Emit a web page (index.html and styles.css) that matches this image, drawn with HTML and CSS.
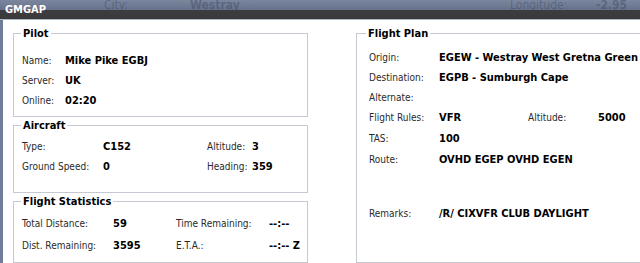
FILE: index.html
```html
<!DOCTYPE html>
<html lang="en">
<head>
  <meta charset="UTF-8" />
  <title>GMGAP</title>
  <link rel="stylesheet" href="styles.css">
</head>
<body>

<div class="titlebar">
  <span class="title">GMGAP</span>
  <div class="ghosts">
    <span class="ghost ghost-city">City:</span>
    <span class="ghost ghost-cityval">Westray</span>
    <span class="ghost ghost-lon">Longitude:</span>
    <span class="ghost ghost-lonval">-2.95</span>
  </div>
</div>

<div class="window">
  <div class="col left">
    <fieldset class="box pilot">
      <legend>Pilot</legend>
      <div class="rows">
        <span class="lbl">Name:</span><span class="val">Mike Pike EGBJ</span>
        <span class="lbl">Server:</span><span class="val">UK</span>
        <span class="lbl">Online:</span><span class="val">02:20</span>
      </div>
    </fieldset>

    <fieldset class="box aircraft">
      <legend>Aircraft</legend>
      <div class="rows">
        <span class="lbl">Type:</span><span class="val">C152</span>
        <span class="lbl">Altitude:</span><span class="val">3</span>
        <span class="lbl">Ground Speed:</span><span class="val">0</span>
        <span class="lbl">Heading:</span><span class="val">359</span>
      </div>
    </fieldset>

    <fieldset class="box stats">
      <legend>Flight Statistics</legend>
      <div class="rows">
        <span class="lbl">Total Distance:</span><span class="val">59</span>
        <span class="lbl">Time Remaining:</span><span class="val">--:--</span>
        <span class="lbl">Dist. Remaining:</span><span class="val">3595</span>
        <span class="lbl">E.T.A.:</span><span class="val">--:-- Z</span>
      </div>
    </fieldset>
  </div>

  <div class="col right">
    <fieldset class="box plan">
      <legend>Flight Plan</legend>
      <div class="rows">
        <span class="lbl">Origin:</span><span class="val wide">EGEW - Westray West Gretna Green</span>
        <span class="lbl">Destination:</span><span class="val wide">EGPB - Sumburgh Cape</span>
        <span class="lbl">Alternate:</span><span class="val wide"></span>
        <span class="lbl">Flight Rules:</span><span class="val">VFR</span>
        <span class="lbl">Altitude:</span><span class="val">5000</span>
        <span class="lbl">TAS:</span><span class="val wide">100</span>
        <span class="lbl">Route:</span><span class="val wide">OVHD EGEP OVHD EGEN</span>
        <span class="lbl remarks">Remarks:</span><span class="val wide remarks">/R/ CIXVFR CLUB DAYLIGHT</span>
      </div>
    </fieldset>
  </div>
</div>

</body>
</html>
```

FILE: styles.css
```css
html, body {
  margin: 0; padding: 0;
  width: 640px; height: 263px;
  overflow: hidden;
  background: #fff;
  font-family: "DejaVu Sans Condensed", "DejaVu Sans", sans-serif;
  font-size: 11px;
  color: #000;
}

.titlebar {
  position: relative;
  height: 19px;
  background: linear-gradient(#7b869e 0, #66728c 10px, #3d3d40 10px, #3a3a3c 19px);
  border-bottom: 1px solid #aeb6c6;
  overflow: hidden;
}
.title {
  position: absolute;
  left: 5px; top: 3px;
  color: #fff;
  font-weight: bold;
  font-size: 11px;
  z-index: 1;
}
.ghosts {
  position: absolute;
  left: 0; top: 0; right: 0;
  height: 10px;
  overflow: hidden;
}
.ghost {
  position: absolute;
  top: -1px;
  font-size: 12px;
  line-height: 12px;
  color: rgba(40, 48, 64, 0.32);
}
.ghost-city { left: 104px; }
.ghost-cityval { left: 190px; font-weight: bold; }
.ghost-lon { left: 510px; }
.ghost-lonval { left: 596px; font-weight: bold; }

.window {
  display: flex;
  gap: 48px;
  height: 243px;
  padding-left: 13px;
  border-left: 3px solid #6f7d99;
  box-sizing: border-box;
}
.col { display: flex; flex-direction: column; }
.left { width: 295px; flex: none; margin-left: -3px; }
.right { width: 320px; flex: none; }

.box {
  margin: 0;
  padding: 0 0 0 8px;
  border: 1px solid #c6c8d2;
  box-sizing: border-box;
}
.box legend {
  font-weight: bold;
  padding: 0 2px;
  margin-left: -1px;
}
.rows {
  display: grid;
  align-items: center;
}
.lbl { color: #2a2a2a; font-size: 10px; white-space: nowrap; }
.val { font-weight: bold; white-space: nowrap; }

.pilot { margin-top: 7px; height: 90px; }
.pilot .rows {
  grid-template-columns: 43px auto;
  grid-auto-rows: 20px;
  padding-top: 10px;
}

.aircraft { margin-top: 2px; height: 74px; }
.aircraft .rows {
  grid-template-columns: 81px 104px 45px auto;
  grid-auto-rows: 20px;
  padding-top: 4px;
}

.stats { margin-top: 2px; flex: 1; }
.stats .rows {
  grid-template-columns: 91px 63px 93px auto;
  grid-auto-rows: 22px;
  padding-top: 4px;
}

.plan { margin-top: 7px; flex: 1; border-right: none; padding-left: 12px; }
.plan legend { margin-left: -3px; }
.plan .rows {
  grid-template-columns: 70px 89px 70px auto;
  grid-template-rows: 20px 20px 20px 21px 21px 20px 34px 20px;
  padding-top: 7px;
}
.plan .wide { grid-column: span 3; }
.plan .remarks { grid-row: 8; }
```
